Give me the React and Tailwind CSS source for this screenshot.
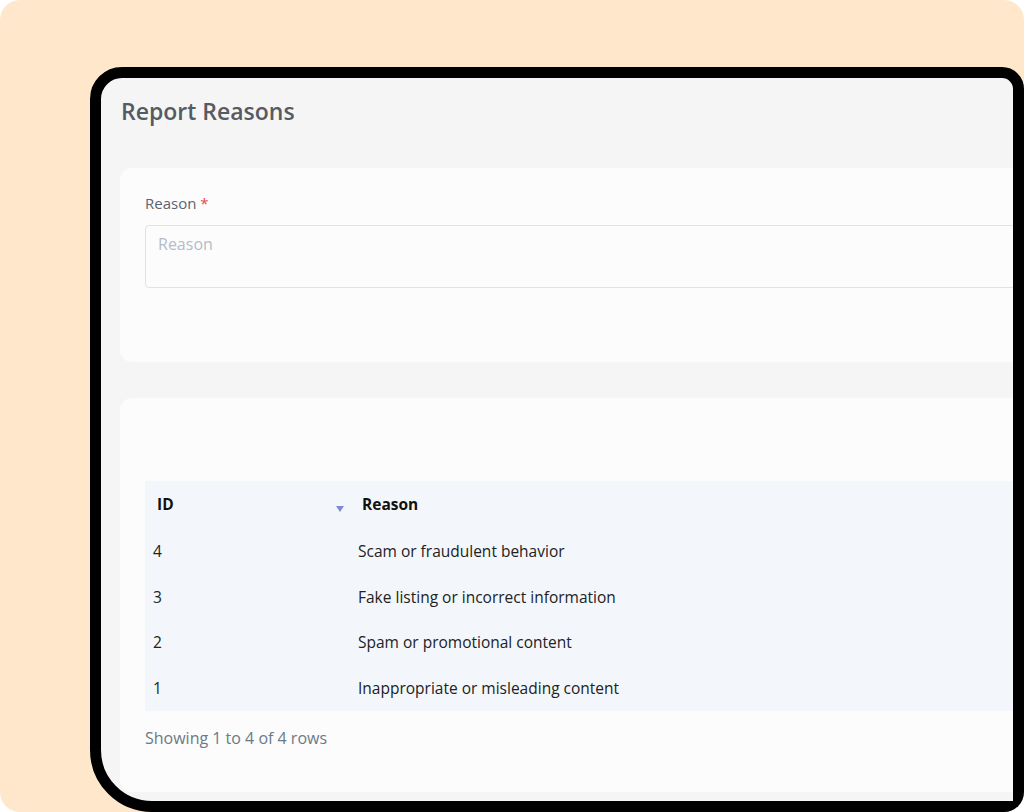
const rows = [
  { id: 4, reason: 'Scam or fraudulent behavior' },
  { id: 3, reason: 'Fake listing or incorrect information' },
  { id: 2, reason: 'Spam or promotional content' },
  { id: 1, reason: 'Inappropriate or misleading content' },
]

export default function App() {
  return (
    <div className="w-[1024px] h-[812px] bg-white overflow-hidden font-['Open_Sans',sans-serif]">
      <div className="w-full h-full bg-[#FFE7CC] rounded-[20px] pl-[90px] pt-[67px] overflow-hidden">
        {/* device frame */}
        <div className="w-[934px] h-[745px] border-[11px] border-black rounded-tl-[32px] rounded-tr-[22px] rounded-bl-[62px] overflow-hidden bg-[#F5F5F5]">
          <div className="w-[1000px] pl-[19px]">
            <h1 className="h-[90px] pt-[18px] pl-[1px] text-[23px] font-semibold text-[#555b63] leading-[30px]">Report Reasons</h1>

            {/* form card */}
            <div className="h-[194px] bg-[#FCFCFC] rounded-xl pl-[25px] pt-[25px]">
              <label className="block text-[15px] text-[#5b6370] leading-[20px]">
                Reason <span className="text-[#e5484d]">*</span>
              </label>
              <div className="mt-[12px] h-[63px] border border-[#dde3ea] rounded-[4px] bg-[#FCFCFC] pl-[12px] pt-[8px] text-[16px] text-[#b3bdc8] leading-[20px]">
                Reason
              </div>
            </div>

            {/* table card */}
            <div className="mt-[36px] h-[394px] bg-[#FCFCFC] rounded-xl pl-[25px] pt-[83px]">
              <div className="bg-[#F3F7FB] text-[15.5px]">
                <div className="flex h-[48px] items-center font-bold text-[#111]">
                  <div className="w-[201px] h-full pl-[12px] flex items-center justify-between pr-[2px]">
                    <span>ID</span>
                    <svg width="8" height="6" viewBox="0 0 8 6" className="mt-[7px]">
                      <path d="M0 0 L8 0 L4 6 Z" fill="#7d8ad6" />
                    </svg>
                  </div>
                  <div className="pl-[16px]">Reason</div>
                </div>
                {rows.map(r => (
                  <div key={r.id} className="flex h-[45.5px] items-center text-[#222]">
                    <div className="w-[201px] pl-[8px]">{r.id}</div>
                    <div className="pl-[12px]">{r.reason}</div>
                  </div>
                ))}
              </div>
              <div className="mt-[17px] text-[16px] text-[#6d7987] leading-[20px]">Showing 1 to 4 of 4 rows</div>
            </div>
          </div>
        </div>
      </div>
    </div>
  )
}
